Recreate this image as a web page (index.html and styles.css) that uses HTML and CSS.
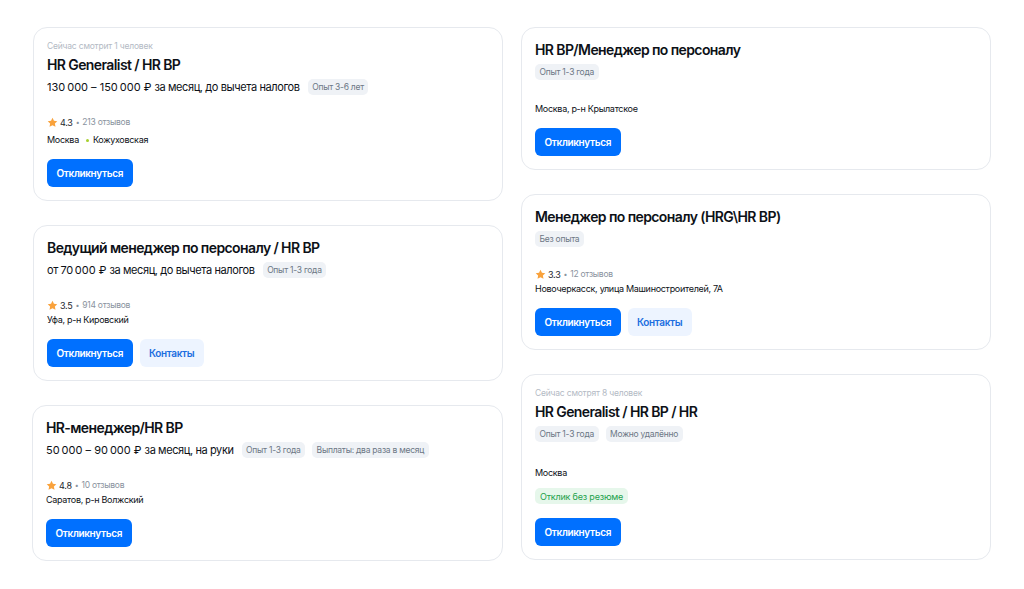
FILE: index.html
```html
<!DOCTYPE html>
<html lang="ru">
<head>
<meta charset="utf-8">
<title>Вакансии</title>
<link rel="stylesheet" href="styles.css">
</head>
<body>
<div class="page">
  <div class="col">
    <div class="card">
      <div class="viewers">Сейчас смотрит 1 человек</div>
      <div class="title">HR Generalist / HR BP</div>
      <div class="row">
        <span class="salary">130&#8239;000 – 150&#8239;000 ₽ за месяц, до вычета налогов</span>
        <span class="tag">Опыт 3-6 лет</span>
      </div>
      <div class="rating"><svg class="star" viewBox="0 0 24 24"><path d="M12 1.5l3.2 6.6 7.2 1-5.2 5.1 1.3 7.2L12 18l-6.5 3.4 1.3-7.2L1.6 9.1l7.2-1z"/></svg><span class="rate">4.3</span><span class="dot">•</span><span class="reviews">213 отзывов</span></div>
      <div class="loc loc-metro">Москва<span class="metro"></span>Кожуховская</div>
      <div class="actions"><button class="btn">Откликнуться</button></div>
    </div>
    <div class="card">
      <div class="title">Ведущий менеджер по персоналу / HR BP</div>
      <div class="row">
        <span class="salary">от 70&#8239;000 ₽ за месяц, до вычета налогов</span>
        <span class="tag">Опыт 1-3 года</span>
      </div>
      <div class="rating"><svg class="star" viewBox="0 0 24 24"><path d="M12 1.5l3.2 6.6 7.2 1-5.2 5.1 1.3 7.2L12 18l-6.5 3.4 1.3-7.2L1.6 9.1l7.2-1z"/></svg><span class="rate">3.5</span><span class="dot">•</span><span class="reviews">914 отзывов</span></div>
      <div class="loc">Уфа, р-н Кировский</div>
      <div class="actions"><button class="btn">Откликнуться</button><button class="btn btn-light">Контакты</button></div>
    </div>
    <div class="card card-shift">
      <div class="title">HR-менеджер/HR BP</div>
      <div class="row">
        <span class="salary">50&#8239;000 – 90&#8239;000 ₽ за месяц, на руки</span>
        <span class="tag">Опыт 1-3 года</span>
        <span class="tag">Выплаты: два раза в месяц</span>
      </div>
      <div class="rating"><svg class="star" viewBox="0 0 24 24"><path d="M12 1.5l3.2 6.6 7.2 1-5.2 5.1 1.3 7.2L12 18l-6.5 3.4 1.3-7.2L1.6 9.1l7.2-1z"/></svg><span class="rate">4.8</span><span class="dot">•</span><span class="reviews">10 отзывов</span></div>
      <div class="loc">Саратов, р-н Волжский</div>
      <div class="actions"><button class="btn">Откликнуться</button></div>
    </div>
  </div>
  <div class="col">
    <div class="card">
      <div class="title">HR BP/Менеджер по персоналу</div>
      <div class="row"><span class="tag">Опыт 1-3 года</span></div>
      <div class="loc loc-first">Москва, р-н Крылатское</div>
      <div class="actions"><button class="btn">Откликнуться</button></div>
    </div>
    <div class="card">
      <div class="title">Менеджер по персоналу (HRG\HR BP)</div>
      <div class="row"><span class="tag">Без опыта</span></div>
      <div class="rating"><svg class="star" viewBox="0 0 24 24"><path d="M12 1.5l3.2 6.6 7.2 1-5.2 5.1 1.3 7.2L12 18l-6.5 3.4 1.3-7.2L1.6 9.1l7.2-1z"/></svg><span class="rate">3.3</span><span class="dot">•</span><span class="reviews">12 отзывов</span></div>
      <div class="loc">Новочеркасск, улица Машиностроителей, 7А</div>
      <div class="actions"><button class="btn">Откликнуться</button><button class="btn btn-light">Контакты</button></div>
    </div>
    <div class="card card-last">
      <div class="viewers">Сейчас смотрят 8 человек</div>
      <div class="title">HR Generalist / HR BP / HR</div>
      <div class="row">
        <span class="tag">Опыт 1-3 года</span>
        <span class="tag">Можно удалённо</span>
      </div>
      <div class="loc loc-wide">Москва</div>
      <div class="green-tag">Отклик без резюме</div>
      <div class="actions actions-green"><button class="btn">Откликнуться</button></div>
    </div>
  </div>
</div>
</body>
</html>
```

FILE: styles.css
```css
* { box-sizing: border-box; }
body {
  margin: 0;
  background: #ffffff;
  font-family: Inter, "Noto Sans", Arial, sans-serif;
  color: #0d1117;
}
.page {
  display: flex;
  gap: 18px;
  padding: 27px 33px;
}
.col {
  width: 470px;
  display: flex;
  flex-direction: column;
  gap: 24px;
}
.card {
  border: 1px solid #e6e9ee;
  border-radius: 14px;
  padding: 12px 12px 13px 13px;
  background: #fff;
}
.card-shift { margin-left: -1px; }
.viewers {
  font-size: 8.5px;
  line-height: 12px;
  color: #b3bac4;
  letter-spacing: -0.2px;
  margin-bottom: 3px;
}
.title {
  font-size: 14px;
  line-height: 20px;
  font-weight: 600;
  color: #0d1117;
  letter-spacing: -0.6px;
}
.row {
  margin-top: 2px;
  height: 20px;
  display: flex;
  align-items: center;
  gap: 7px;
}
.salary {
  font-size: 11px;
  letter-spacing: -0.4px;
  color: #0d1117;
  margin-right: 1px;
}
.tag {
  display: inline-flex;
  align-items: center;
  height: 16px;
  padding: 0 4.5px;
  border-radius: 5px;
  background: #eff2f6;
  color: #6c7785;
  font-size: 8.5px;
  letter-spacing: -0.25px;
}
.rating {
  margin-top: 18px;
  height: 14px;
  display: flex;
  align-items: center;
  font-size: 8.5px;
  letter-spacing: -0.25px;
}
.star {
  width: 11px;
  height: 11px;
  fill: #f9a23c;
  margin-right: 2px;
}
.rate { color: #23272e; font-size: 9px; }
.dot { color: #8a939e; margin: 0 3px; font-size: 7px; }
.reviews { color: #8a939e; }
.loc {
  margin-top: 1px;
  font-size: 9px;
  letter-spacing: -0.3px;
  line-height: 14px;
  color: #0d1117;
  display: flex;
  align-items: center;
}
.loc-metro { margin-top: 4px; }
.loc-first { margin-top: 20px; }
.loc-wide { margin-top: 22px; }
.metro {
  width: 3px;
  height: 3px;
  border-radius: 50%;
  background: #a6cf2c;
  margin: 0 4px 0 7px;
}
.green-tag {
  margin-top: 8px;
  display: inline-flex;
  align-items: center;
  height: 16px;
  padding: 0 5px;
  border-radius: 5px;
  background: #e6f7eb;
  color: #1da24c;
  font-size: 9px;
  letter-spacing: -0.2px;
}
.actions {
  margin-top: 12px;
  display: flex;
  gap: 7px;
}
.actions-green { margin-top: 14px; }
.btn {
  height: 28px;
  padding: 0 9.5px;
  border: none;
  border-radius: 6px;
  background: #0070ff;
  color: #fff;
  font-family: inherit;
  font-size: 10px;
  letter-spacing: -0.35px;
  font-weight: 600;
}
.btn-light {
  background: #edf4ff;
  color: #1b6ee0;
}
```
